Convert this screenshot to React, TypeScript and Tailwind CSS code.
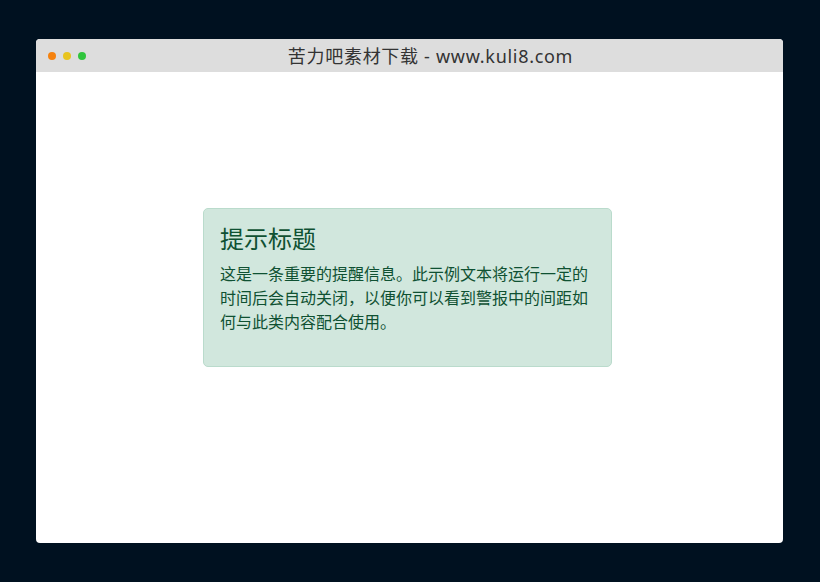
export default function App() {
  return (
    <div
      className="w-[820px] h-[582px] bg-[#001120] pt-[39px] px-[36px]"
      style={{ fontFamily: '"Noto Sans", "Noto Sans CJK SC", sans-serif' }}
    >
      <div className="w-[747px] h-[504px] bg-white rounded-[4px] overflow-hidden flex flex-col">
        {/* title bar */}
        <div className="h-[33px] bg-[#dddddd] flex items-center relative shrink-0">
          <div className="flex gap-[7px] pl-[12px]">
            <span className="w-[8px] h-[8px] rounded-full bg-[#f5820f]" />
            <span className="w-[8px] h-[8px] rounded-full bg-[#e8c41f]" />
            <span className="w-[8px] h-[8px] rounded-full bg-[#30c53d]" />
          </div>
          <div className="absolute inset-0 flex items-center justify-center pl-[42px] text-[18px] tracking-[0.7px] text-[#333] leading-none">
            苦力吧素材下载 - www.kuli8.com
          </div>
        </div>

        {/* content */}
        <div className="flex-1 pt-[136px]">
          <div className="w-[409px] ml-[167px] bg-[#d1e7dd] border border-[#badbcc] rounded-[5px] p-4 text-[#0f5132]">
            <h4 className="text-[24px] leading-[1.2] mb-2">提示标题</h4>
            <p className="text-[16px] leading-[24px] mb-4">
              这是一条重要的提醒信息。此示例文本将运行一定的时间后会自动关闭，以便你可以看到警报中的间距如何与此类内容配合使用。
            </p>
          </div>
        </div>
      </div>
    </div>
  );
}
